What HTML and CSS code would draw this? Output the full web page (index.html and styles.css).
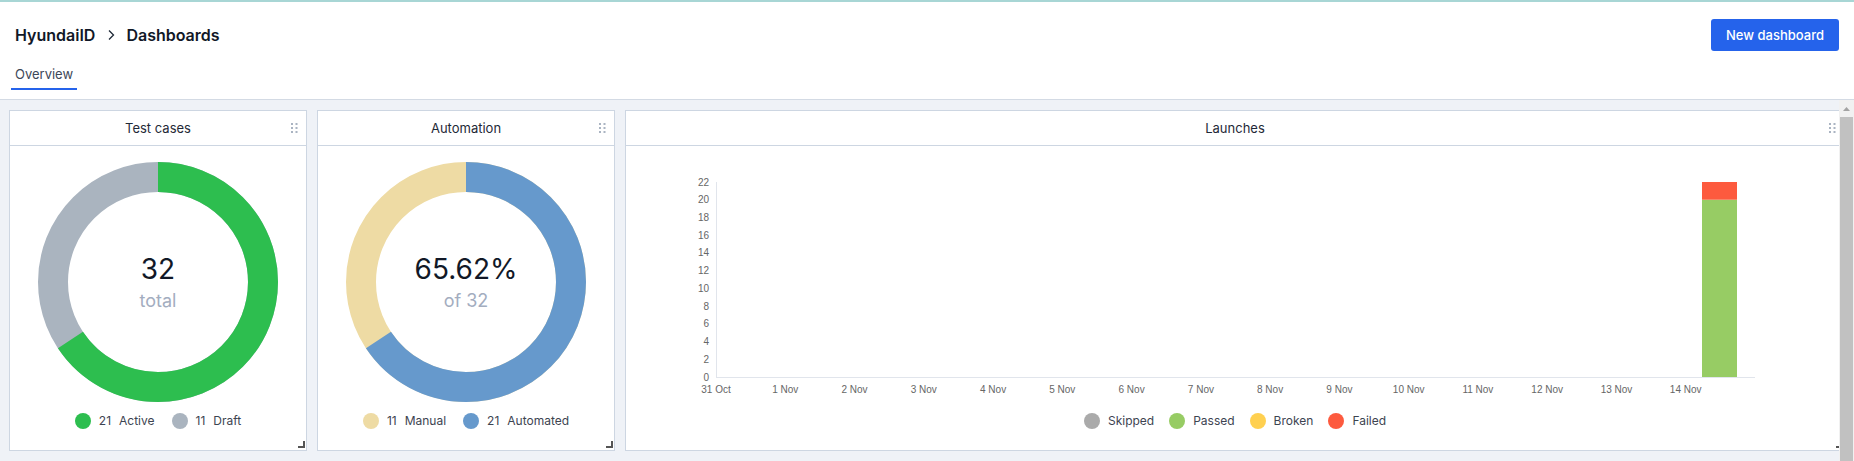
FILE: index.html
```html
<!DOCTYPE html>
<html lang="en">
<head>
<meta charset="utf-8">
<title>Dashboards</title>
<link rel="stylesheet" href="styles.css">
</head>
<body>
<div class="topline"></div>
<header class="page-header">
  <div class="header-row">
    <div class="breadcrumbs">
      <span class="crumb">HyundaiID</span>
      <svg class="crumb-sep" width="12" height="12" viewBox="0 0 12 12"><path d="M4 1.5 L8.5 6 L4 10.5" fill="none" stroke="#1f2937" stroke-width="1.3"/></svg>
      <span class="crumb">Dashboards</span>
    </div>
    <button class="btn-primary">New dashboard</button>
  </div>
  <nav class="tabs"><a class="tab tab-active">Overview</a></nav>
</header>

<div class="workspace">
  <main class="dashboard">
    <section class="widget">
      <div class="widget-head">
        <span class="widget-title">Test cases</span>
        <svg class="drag" width="7" height="10" viewBox="0 0 7 10"><rect x="0" y="0" width="2" height="2"/><rect x="4.5" y="0" width="2" height="2"/><rect x="0" y="4" width="2" height="2"/><rect x="4.5" y="4" width="2" height="2"/><rect x="0" y="8" width="2" height="2"/><rect x="4.5" y="8" width="2" height="2"/></svg>
      </div>
      <div class="widget-body">
        <div class="donut-wrap">
          <svg class="donut" width="240" height="240" viewBox="0 0 240 240">
            <circle cx="120" cy="120" r="105" fill="none" stroke="#aab4bf" stroke-width="30"/>
            <circle cx="120" cy="120" r="105" fill="none" stroke="#2dbe4f" stroke-width="30" stroke-dasharray="432.95 659.73" transform="rotate(-90 120 120)"/>
          </svg>
          <div class="donut-label">
            <span class="donut-value">32</span>
            <span class="donut-sub">total</span>
          </div>
        </div>
        <div class="legend">
          <span class="legend-item"><i class="dot dot-active"></i><b class="count">21</b>Active</span>
          <span class="legend-item"><i class="dot dot-draft"></i><b class="count">11</b>Draft</span>
        </div>
      </div>
      <span class="resize"></span>
    </section>

    <section class="widget">
      <div class="widget-head">
        <span class="widget-title">Automation</span>
        <svg class="drag" width="7" height="10" viewBox="0 0 7 10"><rect x="0" y="0" width="2" height="2"/><rect x="4.5" y="0" width="2" height="2"/><rect x="0" y="4" width="2" height="2"/><rect x="4.5" y="4" width="2" height="2"/><rect x="0" y="8" width="2" height="2"/><rect x="4.5" y="8" width="2" height="2"/></svg>
      </div>
      <div class="widget-body">
        <div class="donut-wrap">
          <svg class="donut" width="240" height="240" viewBox="0 0 240 240">
            <circle cx="120" cy="120" r="105" fill="none" stroke="#eedba4" stroke-width="30"/>
            <circle cx="120" cy="120" r="105" fill="none" stroke="#6699cc" stroke-width="30" stroke-dasharray="432.95 659.73" transform="rotate(-90 120 120)"/>
          </svg>
          <div class="donut-label">
            <span class="donut-value">65.62%</span>
            <span class="donut-sub">of 32</span>
          </div>
        </div>
        <div class="legend">
          <span class="legend-item"><i class="dot dot-manual"></i><b class="count">11</b>Manual</span>
          <span class="legend-item"><i class="dot dot-auto"></i><b class="count">21</b>Automated</span>
        </div>
      </div>
      <span class="resize"></span>
    </section>

    <section class="widget">
      <div class="widget-head">
        <span class="widget-title">Launches</span>
        <svg class="drag" width="7" height="10" viewBox="0 0 7 10"><rect x="0" y="0" width="2" height="2"/><rect x="4.5" y="0" width="2" height="2"/><rect x="0" y="4" width="2" height="2"/><rect x="4.5" y="4" width="2" height="2"/><rect x="0" y="8" width="2" height="2"/><rect x="4.5" y="8" width="2" height="2"/></svg>
      </div>
      <div class="widget-body">
        <svg class="chart" width="1218" height="267">
          <g class="axis">
            <line x1="90.5" y1="36" x2="90.5" y2="231"/>
            <line x1="90" y1="231.5" x2="1129" y2="231.5"/>
          </g>
          <g class="ylabels">
            <text x="83" y="39.5">22</text>
            <text x="83" y="57.2">20</text>
            <text x="83" y="74.9">18</text>
            <text x="83" y="92.7">16</text>
            <text x="83" y="110.4">14</text>
            <text x="83" y="128.1">12</text>
            <text x="83" y="145.9">10</text>
            <text x="83" y="163.6">8</text>
            <text x="83" y="181.3">6</text>
            <text x="83" y="199">4</text>
            <text x="83" y="216.8">2</text>
            <text x="83" y="234.5">0</text>
          </g>
          <g class="xlabels">
            <text x="90" y="246.5">31 Oct</text>
            <text x="159.3" y="246.5">1 Nov</text>
            <text x="228.5" y="246.5">2 Nov</text>
            <text x="297.8" y="246.5">3 Nov</text>
            <text x="367.1" y="246.5">4 Nov</text>
            <text x="436.3" y="246.5">5 Nov</text>
            <text x="505.6" y="246.5">6 Nov</text>
            <text x="574.9" y="246.5">7 Nov</text>
            <text x="644.1" y="246.5">8 Nov</text>
            <text x="713.4" y="246.5">9 Nov</text>
            <text x="782.7" y="246.5">10 Nov</text>
            <text x="851.9" y="246.5">11 Nov</text>
            <text x="921.2" y="246.5">12 Nov</text>
            <text x="990.5" y="246.5">13 Nov</text>
            <text x="1059.7" y="246.5">14 Nov</text>
          </g>
          <rect x="1076" y="53.7" width="35" height="177.3" fill="#97cc64"/>
          <rect x="1076" y="36" width="35" height="17.7" fill="#fd5a3e"/>
        </svg>
        <div class="legend legend-launch">
          <span class="legend-item"><i class="dot dot-skipped"></i>Skipped</span>
          <span class="legend-item"><i class="dot dot-passed"></i>Passed</span>
          <span class="legend-item"><i class="dot dot-broken"></i>Broken</span>
          <span class="legend-item"><i class="dot dot-failed"></i>Failed</span>
        </div>
      </div>
      <span class="resize"></span>
    </section>
  </main>

  <div class="scrollbar">
    <div class="sb-button"><svg width="7" height="4" viewBox="0 0 7 4"><path d="M0 4 L3.5 0 L7 4 Z" fill="#a3a3a3"/></svg></div>
    <div class="sb-thumb"></div>
  </div>
</div>
</body>
</html>
```

FILE: styles.css
```css
* { box-sizing: border-box; }

html, body {
  margin: 0;
  padding: 0;
}

body {
  font-family: Inter, "Noto Sans", "Liberation Sans", sans-serif;
  color: #1f2937;
  background: #ffffff;
  overflow: hidden;
  height: 461px;
}

.topline {
  height: 2px;
  background: #a8d6d5;
}

.page-header {
  padding: 17px 15px 9px 15px;
  border-bottom: 1px solid #d3dae4;
  background: #ffffff;
}

.header-row {
  display: flex;
  align-items: center;
  justify-content: space-between;
  height: 32px;
}

.breadcrumbs {
  display: flex;
  align-items: center;
  font-size: 16px;
  font-weight: 600;
  color: #111827;
}

.crumb-sep {
  margin: 0 9px 0 10px;
}

.btn-primary {
  height: 32px;
  width: 128px;
  padding: 0;
  border: none;
  border-radius: 3px;
  background: #2563eb;
  color: #ffffff;
  font-family: Inter, "Noto Sans", sans-serif;
  font-size: 13px;
  font-weight: 500;
}

.tabs {
  display: flex;
  margin-top: 15px;
  margin-left: -4px;
}

.tab {
  display: block;
  padding: 0 4px 6px 4px;
  font-size: 13px;
  line-height: 16px;
  color: #3d4758;
  border-bottom: 2px solid transparent;
}

.tab-active {
  border-bottom-color: #2563eb;
}

.workspace {
  position: relative;
  height: 361px;
  overflow: hidden;
  background: #eff2f7;
}

.dashboard {
  display: grid;
  grid-template-columns: 298px 298px 1fr;
  column-gap: 10px;
  padding: 10px 9px;
  width: 1854px;
}

.widget {
  position: relative;
  height: 341px;
  background: #ffffff;
  border: 1px solid #cdd6e2;
  display: flex;
  flex-direction: column;
}

.widget-head {
  position: relative;
  height: 35px;
  border-bottom: 1px solid #cdd6e2;
  display: flex;
  align-items: center;
  justify-content: center;
}

.widget-title {
  font-size: 13px;
  font-weight: 400;
  color: #1f2937;
}

.drag {
  position: absolute;
  top: 12px;
  right: 8px;
  fill: #aab4c2;
}

.widget-body {
  flex: 1;
  display: flex;
  flex-direction: column;
  align-items: center;
}

.donut-wrap {
  display: grid;
  margin-top: 16px;
  width: 240px;
  height: 240px;
}

.donut, .donut-label {
  grid-area: 1 / 1;
}

.donut { display: block; }

.donut-label {
  display: flex;
  flex-direction: column;
  align-items: center;
  justify-content: center;
}

.donut-value {
  font-size: 28px;
  line-height: 34px;
  color: #111827;
}

.donut-sub {
  margin-top: 4px;
  font-size: 18px;
  line-height: 22px;
  color: #a3adbf;
}

.legend {
  display: flex;
  justify-content: center;
  gap: 17px;
  margin-top: 11px;
  font-size: 12px;
  line-height: 16px;
  color: #3d4451;
}

.legend-item {
  display: flex;
  align-items: center;
}

.count {
  font-weight: 400;
  margin-right: 8px;
}

.dot {
  display: block;
  width: 16px;
  height: 16px;
  border-radius: 50%;
  margin-right: 8px;
}

.dot-active { background: #2dbe4f; }
.dot-draft { background: #aab4bf; }
.dot-manual { background: #eedba4; }
.dot-auto { background: #6699cc; }
.dot-skipped { background: #aaaaaa; }
.dot-passed { background: #97cc64; }
.dot-broken { background: #ffd050; }
.dot-failed { background: #fd5a3e; }

.legend-launch { margin-top: 0; gap: 15px; }
.legend-launch .dot { margin-right: 8px; }

.chart {
  display: block;
  align-self: flex-start;
}

.axis line {
  stroke: #e1e5ec;
  stroke-width: 1;
}

.chart text {
  font-family: "Liberation Sans", Arial, sans-serif;
  font-size: 10px;
  fill: #666666;
}

.ylabels text { text-anchor: end; }
.xlabels text { text-anchor: middle; }

.resize {
  position: absolute;
  right: 1px;
  bottom: 2px;
  width: 7px;
  height: 7px;
  border-right: 2px solid #555555;
  border-bottom: 2px solid #555555;
}

.scrollbar {
  position: absolute;
  top: 0;
  right: 0;
  width: 15px;
  height: 100%;
  background: #f1f1f1;
  display: flex;
  flex-direction: column;
}

.sb-button {
  height: 17px;
  display: flex;
  align-items: center;
  justify-content: center;
}

.sb-thumb {
  flex: 1;
  margin: 0 1px;
  background: #c1c1c1;
}
```
